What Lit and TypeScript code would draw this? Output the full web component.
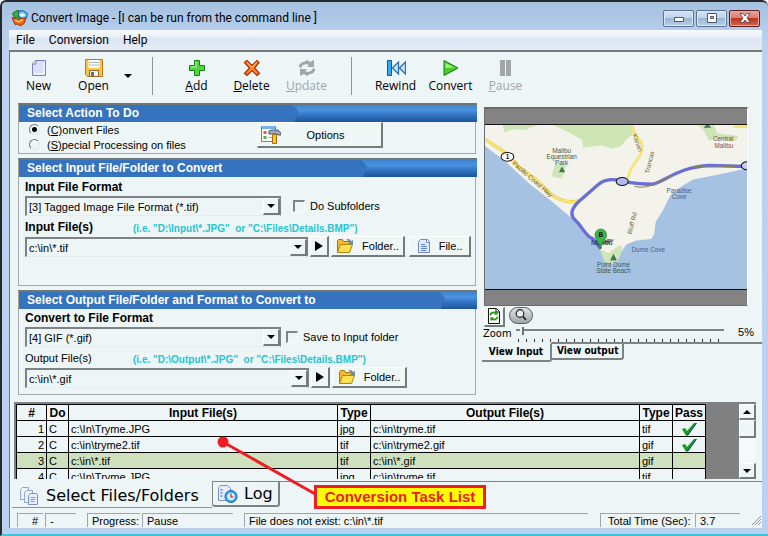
import { LitElement, html, css, svg, nothing, type TemplateResult } from "lit";
import { customElement, property } from "lit/decorators.js";
import { classMap } from "lit/directives/class-map.js";
import { styleMap } from "lit/directives/style-map.js";

const base = css`
  *, *::before, *::after { box-sizing: border-box; }
  button, select, input { font: inherit; color: inherit; margin: 0; border-radius: 0; }
  svg { display: block; flex: none; }
  h2, p { margin: 0; }
  .raised {
    border: 1px solid #fff;
    border-right: 2px solid #777a7a;
    border-bottom: 2px solid #777a7a;
    background: #eef6f6;
  }
`;

const icons: Record<string, TemplateResult> = {
  logo: html`<svg width="18" height="18" viewBox="0 0 18 18">
    <path d="M1.500 4.500 6 1.500l4.500 1-3 3.500.500 3.500-4.500-1z" fill="#3fae3a" stroke="#1b6a24"/>
    <path d="M7.500 2.500 12 1.500l4.500 3-1 4.500-4 1-4-3z" fill="#5cc0f4" stroke="#1d62a0"/>
    <path d="M8 5.500l4-1.500 2.500 2.500-4 1.500z" fill="#eefaff"/>
    <path d="M1 8.500l4 1 1.500 1.500 3-1.500 5.500-.500-2 5.500-4 2.500-2-2-3 .500z" fill="#f2641c" stroke="#a8300c"/>
    <path d="M4 11l4 2 4-2.500" fill="none" stroke="#ffc84a" stroke-width="1.500"/></svg>`,
  new: html`<svg width="18" height="18" viewBox="0 0 18 18">
    <path d="M5.500 1.500H15.500V16.500H2.500V4.500z" fill="#dcdff8" stroke="#7d82b4"/>
    <path d="M2.500 5H6V1.500" fill="#fff" stroke="#7d82b4"/><path d="M4 15h10V4" fill="none" stroke="#fff"/></svg>`,
  save: html`<svg width="20" height="20" viewBox="0 0 20 20">
    <path d="M1.500 1.500h17v17h-15l-2-2z" fill="#f9c24a" stroke="#bd7a12"/>
    <path d="M4.500 2h11v8h-11z" fill="#fff"/><path d="M5 4.500h10M5 7h10" stroke="#a9b7c4"/>
    <path d="M5.500 12.500h9v6h-9z" fill="#f3f3f6" stroke="#8c6b2a"/><path d="M7 14h3v4H7z" fill="#5f6b8e"/></svg>`,
  add: html`<svg width="18" height="18" viewBox="0 0 18 18">
    <path d="M6.500 1.500h5v5h5v5h-5v5h-5v-5h-5v-5h5z" fill="#4fd63a" stroke="#16831a"/>
    <path d="M8 3v5H3" fill="none" stroke="#b9f5a8"/></svg>`,
  delete: html`<svg width="18" height="18" viewBox="0 0 18 18">
    <path d="M1.500 3.500 4 1.500l5 5 5-5 2 2-4.500 5.500 5 5.500-2.500 2-5-5-5 5-2.500-2 5-5.500z" fill="#ff8a1f" stroke="#b3260c" stroke-width="1.200"/>
    <path d="M4 3.500 9 8l4.500-4.500" fill="none" stroke="#ffd277"/></svg>`,
  update: html`<svg width="18" height="18" viewBox="0 0 18 18" fill="#a2a6a6">
    <path d="M1 8V6l3-3h2l3-2 3 2 4-2v7h-7l2-2-3-1-3 1-2 3z"/><path d="M17 10v2l-3 3h-2l-3 2-3-2-4 2v-7h7l-2 2 3 1 3-1 2-3z"/></svg>`,
  rewind: html`<svg width="20" height="18" viewBox="0 0 20 18">
    <path d="M1.500 1.500h4v15h-4z" fill="#2fa9f5" stroke="#0d5ca8"/>
    <path d="M12.500 3v12L6.500 9zM19.500 3v12l-6-6z" fill="#c5e6fb" stroke="#2a6fb4" stroke-width="1.300"/></svg>`,
  play: html`<svg width="18" height="18" viewBox="0 0 18 18">
    <path d="M2 1.500 16 9 2 16.500z" fill="#43cf27" stroke="#177a10"/><path d="M3.500 4 12 8.500 3.500 9z" fill="#a3f184"/></svg>`,
  pause: html`<svg width="18" height="18" viewBox="0 0 18 18" fill="#a2a6a6"><path d="M3 1h5v16H3zM9 1h5v16H9z"/></svg>`,
  options: html`<svg width="20" height="20" viewBox="0 0 20 20">
    <path d="M.500 1.500h14v15H.500z" fill="#fdfefe" stroke="#5d83c4"/><path d="M1 1h13v3H1z" fill="#78b4ec"/>
    <path d="M2.500 6h3v3h-3z" fill="#e35b4b"/><path d="M2.500 11h3v3h-3z" fill="#62b04c"/><path d="M7 7.500h5M7 12.500h4" stroke="#9aa9c8"/>
    <path d="M8 6l3-1h6l3 3v2h-3l-1-1H8z" fill="#9ba9ba" stroke="#4f5d73"/><path d="M11.500 9.500h4v9h-4z" fill="#ffc62c" stroke="#a56e0b"/></svg>`,
  folder: html`<svg width="18" height="16" viewBox="0 0 18 16">
    <path d="M1.500 14.500V2.500l1-1h4l1 2h6v3" fill="#f5b82e" stroke="#a8740d"/>
    <path d="M1.500 14.500 4.500 6.500h12l-3 8z" fill="#ffe04f" stroke="#b5820f"/>
    <path d="M10 2c2-2 4-1 5 1l2-1v5l-5-1 1.500-1C13 3 12 2 10 2z" fill="#7489a3"/></svg>`,
  file: html`<svg width="14" height="16" viewBox="0 0 14 16">
    <path d="M3.500 1.500h7l2 2v11h-11v-11z" fill="#dfe9fb" stroke="#7488c0"/>
    <path d="M9.500 1.500v3h3" fill="#fff" stroke="#7488c0"/><path d="M4 6.500h4M4 8.500h6M4 10.500h6M4 12.500h5" stroke="#5a86d8"/></svg>`,
  refresh: html`<svg width="14" height="16" viewBox="0 0 14 16">
    <path d="M1.500.500h8l3 3v12h-11z" fill="#fff" stroke="#111"/><path d="M9 1v3h3" fill="none" stroke="#111"/>
    <path d="M3.500 7.500c0-3 4-4 6-2M9.800 3.500V6H7.500M10.500 8.500c0 3-4 4-6 2M4.200 12.500V10h2.300" fill="none" stroke="#259a12" stroke-width="1.600"/></svg>`,
  magnify: html`<svg width="14" height="14" viewBox="0 0 14 14">
    <circle cx="6" cy="5.500" r="3.800" fill="#e8ecec" stroke="#222" stroke-width="1.200"/><path d="m9 8.500 3 3.500" stroke="#222" stroke-width="1.800"/></svg>`,
  check: html`<svg width="16" height="14" viewBox="0 0 16 14">
    <path d="M1 7l3-1 2 3 7-8h2.500L7 13H4.500z" fill="#12a01c"/><path d="M15.500 1 7 13H5" fill="none" stroke="#123f66"/></svg>`,
  files: html`<svg width="20" height="20" viewBox="0 0 20 20">
    <path d="M3.500 1.500h6v12h-8v-10z" fill="#eef3ff" stroke="#93a4d6"/><path d="M7.500 4.500h6v12h-8v-10z" fill="#eef3ff" stroke="#93a4d6"/>
    <path d="M11.500 7.500h6l1 1v10h-9v-9z" fill="#e6eefe" stroke="#7b8fcd"/><path d="M11.500 11.500h5M11.500 13.500h5M11.500 15.500h4" stroke="#78a2e4"/></svg>`,
  log: html`<svg width="21" height="20" viewBox="0 0 21 20">
    <path d="M3.500 1.500h7l3 3v12h-12v-13z" fill="#e6eefe" stroke="#7b8fcd"/><path d="M3.500 6h2M3.500 9h2M3.500 12h2" stroke="#4d8ae4" stroke-width="1.500"/>
    <circle cx="14" cy="12.500" r="6" fill="#3aa5f2" stroke="#1861b4"/><circle cx="14" cy="12.500" r="3.800" fill="#d9f0ff"/>
    <path d="M14 9.500v3.500h2.500" fill="none" stroke="#c02a1a" stroke-width="1.200"/></svg>`,
};

@customElement("group-panel")
class GroupPanel extends LitElement {
  @property() heading = "";
  @property({ type: Number }) fill = 60;
  static styles = [base, css`
    :host { display: block; }
    .head {
      height: 19px;
      border-top: 2px solid #6f7775;
      border-left: 1px solid #a8a58f;
      background: linear-gradient(#3f82cf, #4b93e2 30%, #2f6fbd 65%, #1f539c);
    }
    .head h2 {
      height: 17px;
      padding-left: 8px;
      font: bold 12px/16px "Liberation Sans", Arial, sans-serif;
      color: #fff;
      white-space: nowrap;
      background: #3673bf;
      clip-path: polygon(0 0, calc(100% - 6px) 0, 100% 6px, calc(100% - 4px) 100%, 0 100%);
    }
    .body { margin-right: 1px; border: 1px solid #a3a8a8; border-top: 0; }
  `];
  render() {
    return html`<section>
      <div class="head"><h2 style=${styleMap({ width: this.fill + "%" })}>${this.heading}</h2></div>
      <div class="body"><slot></slot></div>
    </section>`;
  }
}

@customElement("map-view")
class MapView extends LitElement {
  static styles = css`
    :host { display: block; }
    svg { display: block; width: 100%; height: auto; }
    text { font-family: "Liberation Sans", Arial, sans-serif; font-size: 19px; fill: #3f5a48; text-anchor: middle; }
    .road { fill: #6f6234; }
    .town { fill: #7a5148; }
    .sea { fill: #4a5f92; }
    .city { fill: #222; font-size: 22px; }
    .num { fill: #111; font-weight: bold; }
  `;
  render() {
    const label = (x: number, y: number, t: string, c = "", r = 0) =>
      svg`<text class=${c} x=${x} y=${y} transform=${r ? `rotate(${r} ${x} ${y})` : nothing}>${t}</text>`;
    return html`<svg viewBox="18 75 783 489" role="img" aria-label="Map of Malibu">
      <rect x="18" y="75" width="783" height="490" fill="#a5c2e3"/>
      <path d="M18 75H801V205L720 222 640 238 600 262 572 285 550 330 528 365 524 400 515 416 470 420 440 432 425 455 412 485 395 490 375 470 350 430 315 395 285 360 220 305 150 250 80 185 18 138z" fill="#f3f2eb"/>
      <path d="M70 75H172L140 90 100 88 76 98zM222 75H454L462 100 440 118 425 138 400 146 365 136 312 142 306 118 270 98z" fill="#cfe5b6"/>
      <path d="M655 75H702L712 100 775 108 768 122 700 118 688 122 672 92z" fill="#cfe5b6"/>
      <path d="M228 190 262 188 256 215 246 236 216 228zM362 446 388 458 420 434 428 440 424 462 405 490 375 485z" fill="#cfe5b6"/>
      <path d="M18 118 80 158 118 200 170 238 215 282Q255 312 300 302" fill="none" stroke="#e8c94c" stroke-width="10"/>
      <path d="M18 118 80 158 118 200 170 238 215 282Q255 312 300 302" fill="none" stroke="#fbe77a" stroke-width="6"/>
      <path d="M458 75Q465 105 480 120T482 165L455 205 442 240M762 80H801" fill="none" stroke="#f7e470" stroke-width="8"/>
      <path d="M300 302C275 325 270 345 290 362S315 405 340 415L364 445M300 302L360 250Q385 232 427 242T520 252C560 240 600 200 690 196L801 199" fill="none" stroke="#6a6fd6" stroke-width="10"/>
      <path d="M465 258Q505 268 540 242L580 226M640 200 690 196 765 200" fill="none" stroke="#8f8740" stroke-width="3"/>
      <path d="M248 203l6 11h-12zM402 464l7 14h-14zM683 73l7 8h-14z" fill="#3c7850" stroke="#3c7850" stroke-width="4"/>
      <ellipse cx="85" cy="170" rx="19" ry="13" fill="#fff" stroke="#111" stroke-width="3"/>${label(85, 177, "1", "num")}
      <ellipse cx="428" cy="244" rx="18" ry="12" fill="#b4b8f4" stroke="#111" stroke-width="3"/>
      <ellipse cx="801" cy="197" rx="17" ry="12" fill="#c9ccf6" stroke="#111" stroke-width="3"/>
      ${label(247, 158, "Malibu")}${label(247, 177, "Equestrian")}${label(247, 196, "Park")}
      ${label(730, 124, "Central", "town")}${label(732, 143, "Malibu", "town")}
      ${label(156, 242, "Pacific Coast Hwy", "road", 41)}
      ${label(468, 130, "Kanan", "road", 70)}${label(516, 188, "Trancas", "road", -76)}${label(464, 370, "Bluff Rd", "road", -76)}
      ${label(598, 277, "Paradise", "sea")}${label(598, 297, "Cove", "sea")}${label(506, 456, "Dume Cove", "sea")}
      ${label(402, 498, "Point Dume")}${label(402, 517, "State Beach")}
      <path d="M366 430 385 415 405 418 388 430z" fill="#000" opacity=".45"/>
      ${label(367, 435, "Malibu", "city")}
      <path d="M363 446C360 425 347 418 347 403a17 17 0 0 1 34 0C381 418 366 425 363 446z" fill="#3fb548" stroke="#1a6a26" stroke-width="2"/>
      ${label(364, 411, "B", "num")}
    </svg>`;
  }
}

interface Tool { icon: string; label: string; key?: boolean; off?: boolean; menu?: boolean }
const tools: Tool[][] = [
  [{ icon: "new", label: "New" }, { icon: "save", label: "Open", menu: true }],
  [{ icon: "add", label: "Add", key: true }, { icon: "delete", label: "Delete", key: true }, { icon: "update", label: "Update", key: true, off: true }],
  [{ icon: "rewind", label: "Rewind" }, { icon: "play", label: "Convert" }, { icon: "pause", label: "Pause", key: true, off: true }],
];

interface Task { input: string; from: string; output: string; to: string; pass?: boolean }
const tasks: Task[] = [
  { input: "c:\\In\\Tryme.JPG", from: "jpg", output: "c:\\in\\tryme.tif", to: "tif", pass: true },
  { input: "c:\\in\\tryme2.tif", from: "tif", output: "c:\\in\\tryme2.gif", to: "gif", pass: true },
  { input: "c:\\in\\*.tif", from: "tif", output: "c:\\in\\*.gif", to: "gif" },
  { input: "c:\\In\\Tryme.JPG", from: "jpg", output: "c:\\in\\tryme.tif", to: "tif" },
];

@customElement("app-root")
class AppRoot extends LitElement {
  static styles = [base, css`
    :host { display: block; font: 11px/14px "Liberation Sans", Arial, sans-serif; color: #000; }
    .window {
      display: flex; flex-direction: column;
      min-height: 100vh;
      padding: 0 6px 6px 6px;
      border: solid #26282c; border-width: 2px 0 0 2px;
      border-bottom: 2px solid #3fc4dc;
      border-radius: 6px 6px 0 0;
      background: linear-gradient(#a5c2df, #b4cdec 28px, #bcd2f0 50px, #b9d0f0);
    }
    .title { display: flex; align-items: center; height: 28px; padding: 4px 2px 0 3px; gap: 2px; }
    .caption { flex: 1; font: 12px/16px Roboto, "Open Sans", sans-serif; white-space: nowrap; }
    .winbtns { display: flex; gap: 2px; align-items: center; }
    .winbtn {
      display: grid; place-items: center; width: 31px; height: 17px; padding: 0;
      border: 1px solid #5c7390; border-radius: 2px;
      background: linear-gradient(#d3e2f3, #bfd3ea 48%, #9bb7d6 50%, #b8d0ea);
      box-shadow: inset 0 0 0 1px #dde9f7;
    }
    .winbtn.close { border-color: #5c1c22; background: linear-gradient(#e9a698, #d87b69 48%, #bb3622 50%, #d4634b); box-shadow: inset 0 0 0 1px #e9aa9c; }
    .menu { display: flex; gap: 14px; height: 20px; padding-left: 7px; margin-left: 1px; background: linear-gradient(#f6fafc, #e9f0f8 7px, #dbe5f3 8px, #e4ecf6); font: 12px/20px Roboto, "Open Sans", sans-serif; }
    .menu a { color: inherit; text-decoration: none; }
    .client { flex: 1; display: flex; flex-direction: column; margin-left: 1px; border-top: 2px solid #7a7a7a; border-left: 1px solid #6f7775; background: #edf5f6; }
    .toolbar { display: flex; align-items: center; height: 51px; padding: 0 0 4px 1px; }
    .group { display: flex; align-items: center; }
    .group + .group { border-left: 1px solid #8f9494; padding-left: 16px; margin-left: 17px; height: 38px; }
    .tool { display: flex; flex-direction: column; align-items: center; width: 55px; padding: 0; border: 0; background: none; font: 12px/16px "Open Sans", "Noto Sans", sans-serif; }
    .tool:disabled { color: #a2a6a6; }
    .tool .ico { display: grid; place-items: center; height: 20px; }
    .drop { display: grid; place-items: center; width: 14px; height: 20px; padding: 0; border: 0; background: none; }
    .down { width: 0; border: 4px solid transparent; border-top-color: #000; border-bottom: 0; }
    .up { width: 0; border: 4px solid transparent; border-bottom-color: #000; border-top: 0; }
    .right { width: 0; border: 5px solid transparent; border-left: 8px solid #000; border-right: 0; }

    .main { display: grid; grid-template-columns: minmax(0, 1fr) 280px; gap: 5px; padding-left: 8px; }
    .left { display: flex; flex-direction: column; gap: 4px; }
    .action { display: flex; justify-content: space-between; height: 31px; padding: 0 92px 0 10px; }
    .radios { display: flex; flex-direction: column; }
    .radios label, .tick { display: flex; align-items: center; gap: 7px; white-space: nowrap; }
    .tick { gap: 5px; margin-left: 10px; height: 20px; }
    .near .tick { margin-left: 3px; }
    .radios label { height: 15px; }
    input[type="radio"] { appearance: none; width: 11px; height: 11px; border: 1px solid #777; border-right-color: #e2e8e8; border-bottom-color: #e2e8e8; border-radius: 50%; }
    input[type="radio"]:checked { background: radial-gradient(circle, #000 2px, transparent 3px); }
    input[type="checkbox"] { appearance: none; width: 12px; height: 12px; border: 2px solid #808585; border-right: 1px solid #f8fcfc; border-bottom: 1px solid #f8fcfc; }
    .options { display: flex; align-items: center; width: 126px; height: 26px; padding: 0 3px; }
    .options span { flex: 1; text-align: center; padding-right: 8px; }
    .form { display: flex; flex-direction: column; padding: 1px 4px 6px 6px; }
    .form.tall { padding: 2px 4px 28px 6px; }
    .line { display: flex; align-items: flex-end; gap: 2px; }
    .name { line-height: 17px; }
    .bold { font-size: 12px; font-weight: bold; }
    .labels { display: flex; align-items: flex-end; height: 20px; }
    .labels .name { flex: 0 0 108px; }
    .hint { font-size: 10px; font-weight: bold; color: #26c5d2; white-space: pre; line-height: 15px; }
    .combo { display: flex; height: 20px; border: 2px solid #7d8282; border-right-width: 1px; border-bottom: 1px solid #e4ecec; }
    .combo.mid { width: 256px; }
    .combo.wide { width: 284px; }
    .combo select { appearance: none; flex: 1; min-width: 0; padding: 0 2px; border: 0; background: none; outline: 0; }
    .combo .arrow { display: grid; place-items: center; width: 17px; pointer-events: none; }
    .btn { display: flex; align-items: center; justify-content: center; gap: 8px; height: 21px; padding: 0 3px; }
    .go { width: 19px; }
    .folder { width: 75px; }
    .doc { width: 62px; margin-left: 2px; }

    .right-col { display: flex; flex-direction: column; padding-top: 4px; }
    .preview { margin: 0 14px 0 2px; padding: 15px 0; border: 1px solid #6c6c6c; border-top-width: 2px; border-right-color: #fff; background: #838383; }
    .preview map-view { border: solid #111; border-width: 1px 0; }
    .views { display: flex; align-items: flex-start; gap: 4px; padding: 1px 0 0 2px; }
    .sq { display: grid; place-items: center; width: 21px; height: 20px; padding: 0; }
    .pill { display: grid; place-items: center; width: 24px; height: 17px; padding: 0; border: 1px solid #55595c; border-radius: 9px; background: linear-gradient(#dfe3e5, #9fa5a9); }
    .zoom { display: flex; align-items: center; height: 15px; padding: 0 8px 0 1px; }
    .zoom label { width: 33px; font: 11px/14px "DejaVu Sans Condensed", "DejaVu Sans", sans-serif; }
    .scale { width: 208px; height: 15px; background: repeating-linear-gradient(90deg, #333 0 1px, transparent 1px 8px) 2px 100% / 100% 3px no-repeat; }
    .scale input { appearance: none; display: block; width: 100%; height: 8px; background: linear-gradient(#7d8282, #7d8282) 0 2px / 100% 2px no-repeat; outline: 0; }
    .scale input::-webkit-slider-thumb { appearance: none; width: 4px; height: 8px; border-right: 2px solid #6f7474; background: #edf5f6; }
    .zoom output { margin-left: auto; align-self: flex-start; line-height: 11px; }
    .vtabs { display: flex; align-items: flex-start; }
    .vtabs::after { content: ""; flex: 1; border-top: 2px solid #7d8282; }
    .vtab { height: 18px; padding: 0 5px; border: 2px solid #7d8282; border-left: 0; border-radius: 0 0 3px 0; background: none; font: bold 10px/14px "DejaVu Sans Condensed", "DejaVu Sans", sans-serif; white-space: nowrap; }
    .vtab.on { height: 20px; width: 70px; border-top-color: transparent; padding: 1px 6px 0; }
    .vtab:not(.on) { width: 72px; }

    .grid { display: flex; height: 77px; margin: 7px 6px 0 4px; border: 2px solid #7d8282; border-right: 0; border-bottom: 0; background: #808080; overflow: hidden; }
    .clip { flex: 1; overflow: hidden; padding-right: 33px; }
    table { width: 100%; table-layout: fixed; border-collapse: collapse; background: #edf5f6; }
    th, td { height: 16px; padding: 0 2px; border: 1px solid #000; line-height: 14px; overflow: hidden; white-space: nowrap; text-align: left; }
    th { text-align: center; font-size: 12px; padding: 0; }
    td.n { text-align: right; }
    td svg { margin: 0 auto; }
    .c-n { width: 30px; } .c-do { width: 22px; } .c-type { width: 33px; } .c-pass { width: 33px; }
    tr.sel { background: #cfe0bf; }
    .scroll { display: flex; flex-direction: column; width: 17px; background: #f4fafa; }
    .scroll button { display: grid; place-items: center; height: 16px; padding: 0; }
    .scroll .thumb { height: 18px; }
    .scroll .space { flex: 1; }

    .tabs { display: flex; align-items: flex-start; margin: 2px 0 0 2px; height: 29px; }
    .tabs::after { content: ""; flex: 1; border-top: 1px solid #7d8282; }
    .tab { display: flex; align-items: center; gap: 6px; background: none; border: 0; font: 16px/20px "DejaVu Sans", sans-serif; white-space: nowrap; }
    .tab.on { height: 27px; width: 200px; gap: 7px; padding: 3px 7px 0; border-bottom: 1px solid #8d9292; }
    .tab.log { height: 26px; width: 68px; border: 1px solid #7d8282; border-right-width: 2px; border-bottom-width: 2px; border-radius: 0 0 3px 3px; padding: 0 4px; }
    .status { display: flex; align-items: center; margin-top: 3px; padding: 0 1px 0 7px; white-space: nowrap; }
    .status div { height: 14px; line-height: 15px; padding-left: 4px; border: solid #a0a5a5; border-width: 1px 0 0 1px; }
    .status .w1 { width: 26px; padding-left: 14px; margin-right: 2px; }
    .status .w2 { width: 31px; margin-right: 11px; }
    .status .w3 { width: 53px; margin-right: 2px; }
    .status .w4 { width: 91px; margin-right: 11px; }
    .status .w5 { flex: 1; margin-right: 12px; }
    .status .w6 { width: 93px; padding-left: 7px; margin-right: 2px; }
    .status .w7 { width: 45px; margin-right: 11px; }

    .tasks { position: relative; }
    .callout { position: absolute; left: 207px; top: 41px; pointer-events: none; }
    .note { position: absolute; left: 97px; top: 49px; width: 172px; height: 24px; border: 3px solid #ee1c25; background: #ffff00; color: #ee1c25; font: bold 15px/18px "Liberation Sans", Arial, sans-serif; text-align: center; white-space: nowrap; }
  `];

  private tool(t: Tool) {
    return html`<button class="tool" ?disabled=${!!t.off}><span class="ico">${icons[t.icon]}</span>
      <span>${t.key ? html`<u>${t.label[0]}</u>${t.label.slice(1)}` : t.label}</span></button>
      ${t.menu ? html`<button class="drop" aria-label="Open recent"><span class="down"></span></button>` : nothing}`;
  }

  private combo(id: string, value: string, size: string) {
    return html`<span class="combo ${size}"><select id=${id}><option>${value}</option></select><span class="arrow raised"><span class="down"></span></span></span>`;
  }

  private row(t: Task, i: number) {
    return html`<tr class=${classMap({ sel: i === 2 })}><td class="n">${i + 1}</td><td>C</td><td>${t.input}</td><td>${t.from}</td>
      <td>${t.output}</td><td>${t.to}</td><td>${t.pass ? icons.check : nothing}</td></tr>`;
  }

  render() {
    return html`<div class="window">
      <header class="title">${icons.logo}<span class="caption">Convert Image - [I can be run from the command line ]</span>
        <div class="winbtns">
          <button class="winbtn" aria-label="Minimize"><svg width="12" height="8" viewBox="0 0 12 8"><path d="M1.500 3.500h9v4h-9z" fill="#fff" stroke="#4c5968"/></svg></button>
          <button class="winbtn" aria-label="Maximize"><svg width="12" height="10" viewBox="0 0 12 10"><path d="M1.500.500h9v9h-9z" fill="#fff" stroke="#4c5968"/><path d="M4.500 3.500h3v2h-3z" fill="#a9c0dc" stroke="#4c5968"/></svg></button>
          <button class="winbtn close" aria-label="Close"><svg width="12" height="10" viewBox="0 0 12 10"><path d="M1 .500h3L6 3 8 .500h3L8 5l3 4.500H8L6 7 4 9.500H1L4 5z" fill="#fff" stroke="#5a4048" stroke-width=".8"/></svg></button>
        </div>
      </header>
      <nav class="menu"><a href="#file">File</a><a href="#conversion">Conversion</a><a href="#help">Help</a></nav>
      <div class="client">
        <div class="toolbar">${tools.map((g) => html`<div class="group">${g.map((t) => this.tool(t))}</div>`)}</div>
        <div class="main">
          <div class="left">
            <group-panel heading="Select Action To Do" .fill=${61}>
              <div class="action">
                <div class="radios">
                  <label><input type="radio" name="mode" checked><span>(<u>C)</u>onvert Files</span></label>
                  <label><input type="radio" name="mode"><span>(<u>S)</u>pecial Processing on files</span></label>
                </div>
                <button class="options raised">${icons.options}<span>Options</span></button>
              </div>
            </group-panel>
            <group-panel heading="Select Input File/Folder to Convert" .fill=${76}>
              <div class="form tall">
                <label class="name bold" for="in-format">Input File Format</label>
                <div class="line">${this.combo("in-format", "[3] Tagged Image File Format (*.tif)", "mid")}
                  <label class="tick"><input type="checkbox">Do Subfolders</label></div>
                <div class="labels"><label class="name bold" for="in-files">Input File(s)</label><span class="hint">(i.e. "D:\\Input\\*.JPG"  or "C:\\Files\\Details.BMP")</span></div>
                <div class="line">${this.combo("in-files", "c:\\in\\*.tif", "wide")}
                  <button class="btn go raised" aria-label="Run"><span class="right"></span></button>
                  <button class="btn folder raised">${icons.folder}Folder..</button>
                  <button class="btn doc raised">${icons.file}File..</button></div>
              </div>
            </group-panel>
            <group-panel heading="Select Output File/Folder and Format to Convert to" .fill=${93}>
              <div class="form">
                <label class="name bold" for="out-format">Convert to File Format</label>
                <div class="line near">${this.combo("out-format", "[4] GIF (*.gif)", "mid")}
                  <label class="tick"><input type="checkbox">Save to Input folder</label></div>
                <div class="labels"><label class="name" for="out-files">Output File(s)</label><span class="hint">(i.e. "D:\\Output\\*.JPG"  or "C:\\Files\\Details.BMP")</span></div>
                <div class="line">${this.combo("out-files", "c:\\in\\*.gif", "wide")}
                  <button class="btn go raised" aria-label="Run"><span class="right"></span></button>
                  <button class="btn folder raised">${icons.folder}Folder..</button></div>
              </div>
            </group-panel>
          </div>
          <div class="right-col">
            <div class="preview"><map-view></map-view></div>
            <div class="views"><button class="sq raised" aria-label="Refresh">${icons.refresh}</button><button class="pill" aria-label="Magnify">${icons.magnify}</button></div>
            <div class="zoom"><label for="zoom">Zoom</label><div class="scale"><input id="zoom" type="range" min="0" max="100" value="2"></div><output for="zoom">5%</output></div>
            <div class="vtabs"><button class="vtab on">View Input</button><button class="vtab">View output</button></div>
          </div>
        </div>
        <div class="tasks">
          <div class="grid">
            <div class="clip"><table>
              <colgroup><col class="c-n"><col class="c-do"><col><col class="c-type"><col><col class="c-type"><col class="c-pass"></colgroup>
              <thead><tr><th>#</th><th>Do</th><th>Input File(s)</th><th>Type</th><th>Output File(s)</th><th>Type</th><th>Pass</th></tr></thead>
              <tbody>${tasks.map((t, i) => this.row(t, i))}</tbody>
            </table></div>
            <div class="scroll"><button class="raised" aria-label="Scroll up"><span class="up"></span></button><span class="thumb raised"></span><span class="space"></span><button class="raised" aria-label="Scroll down"><span class="down"></span></button></div>
          </div>
          <div class="callout">
            <svg width="110" height="62" viewBox="0 0 110 62"><circle cx="6" cy="6" r="5.500" fill="#ee1c25"/><path d="M6 6l94 53" stroke="#ee1c25" stroke-width="3"/></svg>
            <div class="note">Conversion Task List</div>
          </div>
        </div>
        <div class="tabs"><button class="tab on">${icons.files}Select Files/Folders</button><button class="tab log">${icons.log}Log</button></div>
        <footer class="status"><div class="w1">#</div><div class="w2">-</div><div class="w3">Progress:</div><div class="w4">Pause</div><div class="w5">File does not exist: c:\\in\\*.tif</div><div class="w6">Total Time (Sec):</div><div class="w7">3.7</div>
          <svg width="10" height="10" viewBox="0 0 10 10"><path d="M1 10 10 1M4 10l6-6M7 10l3-3" stroke="#8f9494"/></svg></footer>
      </div>
    </div>`;
  }
}
